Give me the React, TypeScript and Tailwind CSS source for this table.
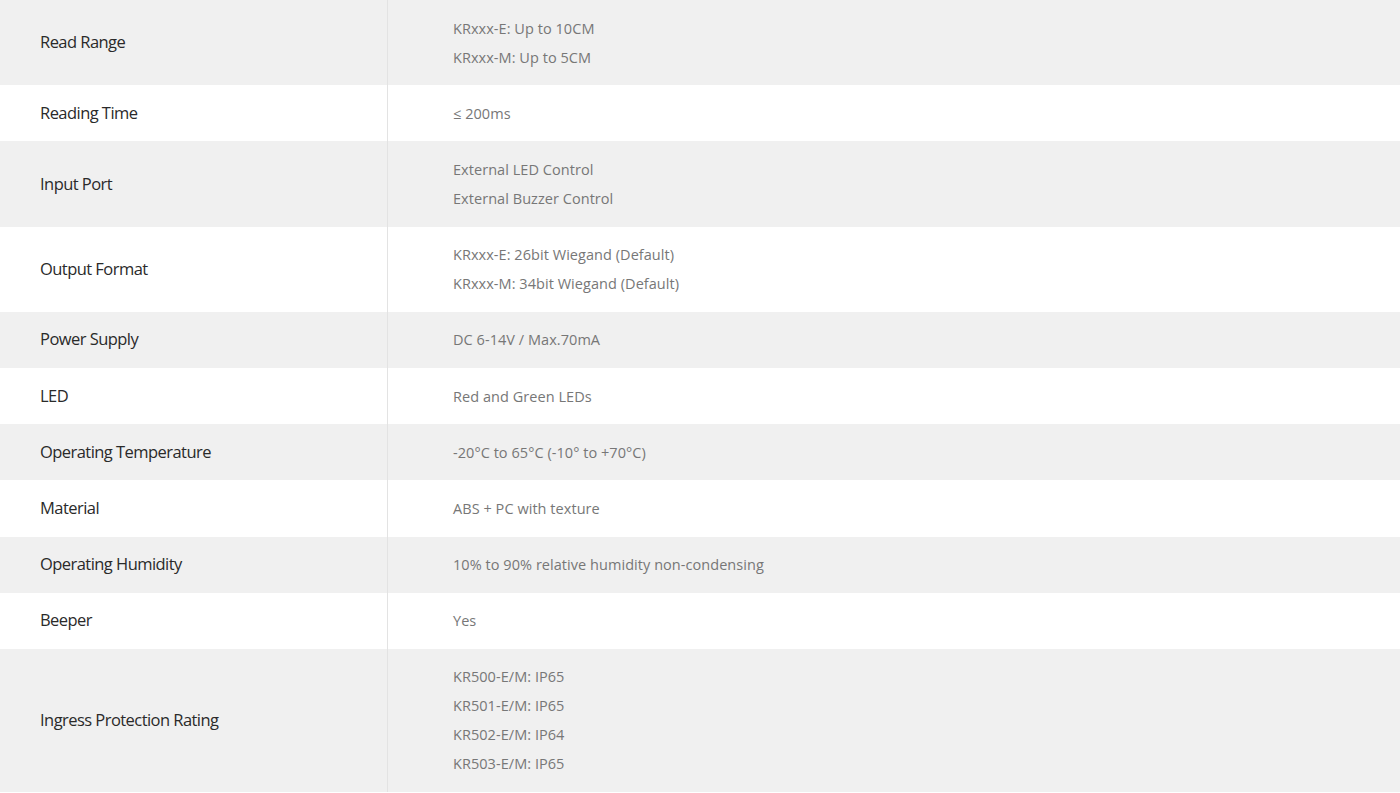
import React from 'react'

const specs: { label: string; values: string[] }[] = [
  { label: 'Read Range', values: ['KRxxx-E: Up to 10CM', 'KRxxx-M: Up to 5CM'] },
  { label: 'Reading Time', values: ['≤ 200ms'] },
  { label: 'Input Port', values: ['External LED Control', 'External Buzzer Control'] },
  { label: 'Output Format', values: ['KRxxx-E: 26bit Wiegand (Default)', 'KRxxx-M: 34bit Wiegand (Default)'] },
  { label: 'Power Supply', values: ['DC 6-14V / Max.70mA'] },
  { label: 'LED', values: ['Red and Green LEDs'] },
  { label: 'Operating Temperature', values: ['-20°C to 65°C (-10° to +70°C)'] },
  { label: 'Material', values: ['ABS + PC with texture'] },
  { label: 'Operating Humidity', values: ['10% to 90% relative humidity non-condensing'] },
  { label: 'Beeper', values: ['Yes'] },
  {
    label: 'Ingress Protection Rating',
    values: ['KR500-E/M: IP65', 'KR501-E/M: IP65', 'KR502-E/M: IP64', 'KR503-E/M: IP65'],
  },
]

export default function App() {
  return (
    <div className="w-[1400px] bg-white font-['Open_Sans',sans-serif]">
      {specs.map((row, i) => (
        <div
          key={row.label}
          className={`flex ${i % 2 === 0 ? 'bg-[#f0f0f0]' : 'bg-white'}`}
        >
          <div className="flex w-[388px] shrink-0 items-center border-r border-[#e3e3e3] pl-10 text-[16.5px] tracking-[-0.55px] text-[#2a2a2a]">
            {row.label}
          </div>
          <div className="flex-1 py-[13.6px] pl-[65px] text-[14.5px] leading-[29px] tracking-[0.05px] text-[#777]">
            {row.values.map((v) => (
              <div key={v}>{v}</div>
            ))}
          </div>
        </div>
      ))}
    </div>
  )
}
